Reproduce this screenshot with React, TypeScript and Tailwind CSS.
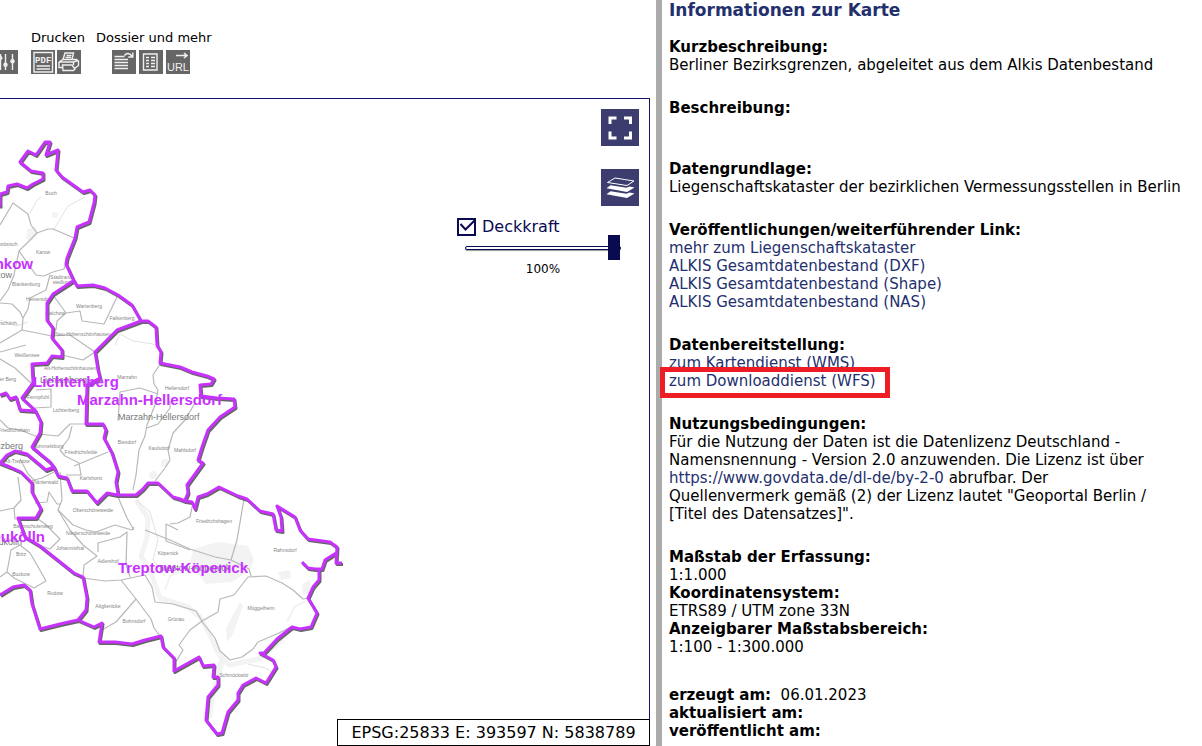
import { useState } from 'react';
import type { ReactNode } from 'react';

const districtBorders = [
  '0,207 0,194 7,192 8,186 17,184 27,188 33,184 43,179 43,173 31,171 20,162 28,151 36,155 45,142 50,142 46,155 58,150 56,170 62,177 83,192 90,190 95,195 94,203 89,222 77,227 75,238 67,258 66,264 73,279 77,286 93,285 105,288 118,295 132,305 141,321 148,321 156,327 157,345 161,352 160,363 180,367 192,372 207,376 214,379 211,384 200,385 201,396 217,398 234,399 235,407 220,417 208,430 202,447 198,460 203,463 187,485 188,493 185,500',
  '54,467 58,476 67,478 72,491 87,491 97,503 107,493 117,495 136,495 143,489 148,483 158,483 173,497 180,499 185,501 192,502 195,509 198,497 207,494 219,487 238,496 247,499 260,511 273,514 276,530 282,531 281,517 277,506 295,517 300,530 308,539 330,542 337,547 336,563 342,563',
  '336,553 325,560 322,569 315,569 308,568 302,562',
  '319,569 319,580 313,587 308,598 317,613 311,627 300,629 292,627 277,639 264,653 260,653 273,660 276,667 266,683 256,678 243,685 238,693 238,700 228,712 222,733 217,734 206,720 208,697 218,685 218,677 213,677 214,665 203,666 199,657 174,671 174,658 163,647 161,636 145,640 132,644 115,642 99,642 102,623 94,627 78,620 60,624 40,629 32,604 30,590 24,585 13,587 0,595',
  '78,620 86,610 87,598 83,577 74,573 40,546 25,537 18,518 36,518 41,509 32,492 32,483 21,472 10,467 0,463 7,455 15,451 27,454 46,470 54,467 50,462 32,447 40,433 41,422 35,410 22,398 25,394 33,383 32,364 47,363 52,356 62,357 62,350 52,338 53,328 47,320 47,303 53,294 73,281',
  '0,395 6,393 10,399 16,397 20,410 36,411',
  '141,321 117,330 95,352 98,370 100,378 87,385 86,424 103,424 106,430 104,438 112,453 118,472 116,482 118,494',
];

const localityLines = [
  '0,225 13,203 28,214 31,225 37,233 48,229 53,229 74,238',
  '37,233 19,251 14,275 8,290 0,301',
  '19,251 36,275 44,276 53,272 64,269 67,260',
  '50,275 46,290 30,298 28,309 23,318 22,330 0,343',
  '22,330 52,336 70,335 95,352 116,331',
  '0,303 12,304 20,312 23,318',
  '0,359 15,368 32,384',
  '53,295 66,313 80,311 82,321 104,324 118,295',
  '66,313 57,321 56,330',
  '160,364 153,375 154,384 158,390 155,405 147,425 145,436 139,450 136,475 133,490',
  '118,421 120,392 140,388 158,394',
  '195,403 185,420 173,433 168,450 170,460 165,468 155,481',
  '147,428 158,424 170,408 170,401',
  '36,390 51,389 51,407 35,408',
  '39,434 58,436 70,424 86,424',
  '72,426 69,438 60,450 65,456 79,463 81,475 66,475',
  '74,466 108,452',
  '60,472 62,500 58,510 73,525 86,530 96,532 115,525 132,530 134,527',
  '58,510 70,530 83,545 97,556 84,565 83,577',
  '98,552 98,543 120,537 127,532 126,564 130,577',
  '118,497 127,518 134,530',
  '20,459 28,474 34,480 42,478 58,470',
  '18,477 21,500 14,508 15,519 19,519',
  '35,503 47,502 49,492 57,504 61,504',
  '38,519 45,524 60,539 50,549 41,546',
  '0,511 14,508',
  '0,577 7,572 11,550 20,545 30,553 37,565 46,581 34,588 14,578 7,572',
  '83,578 105,581 121,580 145,575 152,587 155,602 173,604 196,611 203,623 215,638 220,651 230,660 242,657 253,649 258,642 279,633 291,627',
  '121,580 136,599 116,622 100,631',
  '136,599 151,619 154,628 160,636',
  '174,665 183,650 179,645 190,630 202,621 218,612 220,599 234,595 248,577 266,576 282,583 293,590 303,599 309,598',
  '244,499 237,540 231,560 215,557 190,549 170,540 145,530',
  '231,560 249,569 251,576',
  '193,503 190,517 178,523 170,524',
  '178,530 166,524 166,541 190,550',
  '0,420 8,428 20,430 38,437',
  '26,345 0,352',
  '62,355 83,360 95,352',
];

const faintLines = [
  '30,213 37,200 41,197',
  '54,229 68,206 85,197',
  '115,345 120,334 133,341 153,344 158,350',
  '0,320 16,326 28,322',
  '136,500 150,512 158,540 153,560 165,576',
  '248,664 265,668 272,672',
];

const localityLabels: [number, number, string][] = [
  [51, 195, 'Buch'],
  [43, 254, 'Karow'],
  [26, 286, 'Blankenburg'],
  [62, 279, 'Stadtrand-'],
  [62, 284, 'siedlung'],
  [39, 301, 'Heinersdorf'],
  [89, 308, 'Wartenberg'],
  [55, 315, 'Malchow'],
  [122, 320, 'Falkenberg'],
  [83, 336, 'Neu-Hohenschönhausen'],
  [27, 357, 'Weißensee'],
  [70, 370, 'Alt-Hohenschönhausen'],
  [4, 246, 'Französisch'],
  [2, 325, 'Niederschönh.'],
  [-2, 381, 'Prenzlauer Berg'],
  [38, 399, 'Fennpfuhl'],
  [66, 412, 'Lichtenberg'],
  [127, 379, 'Marzahn'],
  [177, 390, 'Hellersdorf'],
  [14, 432, 'Friedrichshain'],
  [48, 448, 'Rummelsburg'],
  [81, 454, 'Friedrichsfelde'],
  [127, 444, 'Biesdorf'],
  [159, 450, 'Kaulsdorf'],
  [185, 452, 'Mahlsdorf'],
  [91, 480, 'Karlshorst'],
  [17, 463, 'Alt-Treptow'],
  [45, 484, 'Plänterwald'],
  [93, 512, 'Oberschöneweide'],
  [88, 535, 'Niederschöneweide'],
  [33, 528, 'Baumschulenweg'],
  [70, 550, 'Johannisthal'],
  [108, 563, 'Adlershof'],
  [21, 556, 'Britz'],
  [21, 576, 'Buckow'],
  [55, 595, 'Rudow'],
  [108, 608, 'Altglienicke'],
  [134, 623, 'Bohnsdorf'],
  [176, 621, 'Grünau'],
  [168, 555, 'Köpenick'],
  [214, 523, 'Friedrichshagen'],
  [285, 552, 'Rahnsdorf'],
  [261, 610, 'Müggelheim'],
  [234, 677, 'Schmöckwitz'],
];

function DistrictMap() {
  return (
    <svg
      className="block h-full w-full"
      viewBox="0 99 649 647"
      preserveAspectRatio="xMinYMin slice"
      role="img"
      aria-label="Berliner Bezirksgrenzen"
      fontFamily='"Liberation Sans", Arial, sans-serif'
    >
      <g fill="#f3f3f3">
        <path d="M193 549l25-7 30 4 6 14-4 10-18 12-26 2-16-20z" />
        <path d="M27 230l8-4 3 7-6 8-6-2z" />
        <circle cx="55" cy="215" r="3" />
        <path d="M278 572l12-2 1 8-10 2zM302 584l8-4 1 12-8 4z" />
        <path d="M226 628l14-26 3 4-10 28-6 8z" />
        <circle cx="165" cy="463" r="4" />
        <circle cx="153" cy="475" r="4" />
      </g>
      <g fill="none" stroke="#f3f3f3" strokeLinejoin="round">
        <path
          strokeWidth="5"
          d="M136 500l12 18-1 20-6 18 11 20 8 22 28 9 12 10 9 16 10 22 10 10 30-6 24-20"
        />
        <path strokeWidth="6" d="M222 660l-5 20-6 20-2 18" />
        <path strokeWidth="2" d="M309 600l-14 6-8 16M165 590l5-14 16-8" />
      </g>
      <g fill="none" stroke="#e2e2e2" strokeWidth="1">
        {faintLines.map((points) => (
          <polyline key={points} points={points} />
        ))}
      </g>
      <g fill="none" stroke="#b8b8b8" strokeWidth="1.2" strokeLinejoin="round">
        {localityLines.map((points) => (
          <polyline key={points} points={points} />
        ))}
      </g>
      <g fill="#858585" fontSize="5" textAnchor="middle">
        {localityLabels.map(([x, y, name]) => (
          <text key={name} x={x} y={y}>
            {name}
          </text>
        ))}
      </g>
      <g fill="#777777" fontSize="9">
        <text x="118" y="420">Marzahn-Hellersdorf</text>
        <text x="40" y="383">Lichtenberg</text>
        <text x="12" y="278" textAnchor="end">Pankow</text>
        <text x="23" y="449" textAnchor="end">Kreuzberg</text>
        <text x="22" y="545" textAnchor="end">Neukölln</text>
        <text x="158" y="571">Treptow-Köpenick</text>
      </g>
      <g
        fill="none"
        stroke="#666666"
        strokeWidth="3"
        strokeLinejoin="round"
        transform="translate(1 1.5)"
      >
        {districtBorders.map((points) => (
          <polyline key={points} points={points} />
        ))}
      </g>
      <g fill="none" stroke="#c832ff" strokeWidth="3" strokeLinejoin="round">
        {districtBorders.map((points) => (
          <polyline key={points} points={points} />
        ))}
      </g>
      <g fill="#c832ff" fontSize="15" fontWeight="bold">
        <text x="33" y="269" textAnchor="end">Pankow</text>
        <text x="33" y="387">Lichtenberg</text>
        <text x="77" y="405">Marzahn-Hellersdorf</text>
        <text x="45" y="542" textAnchor="end">Neukölln</text>
        <text x="118" y="573">Treptow-Köpenick</text>
      </g>
    </svg>
  );
}

function ToolButton({ label, children }: { label: string; children: ReactNode }) {
  return (
    <button type="button" aria-label={label} className="block size-6 shrink-0 bg-[#666666]">
      <svg viewBox="0 0 24 24" className="size-6" fill="none" stroke="#f0f0f0" strokeWidth="1.4">
        {children}
      </svg>
    </button>
  );
}

function Toolbar() {
  return (
    <header className="flex h-[98px] items-start pt-[29px] text-[13px] leading-[18px]">
      <div className="-ml-1.5 mr-[13px] pt-[21px]">
        <ToolButton label="Einstellungen">
          <path d="M6.5 4v16M11.500 4v16M18.500 4v16" />
          <g fill="#f0f0f0" stroke="none">
            <circle cx="6.5" cy="8" r="2" />
            <circle cx="11.5" cy="14.700" r="2.200" />
            <circle cx="18.5" cy="11.300" r="2.200" />
          </g>
        </ToolButton>
      </div>
      <div className="w-[65px]">
        <div className="whitespace-nowrap">Drucken</div>
        <div className="mt-[3px] flex gap-0.5">
          <ToolButton label="PDF">
            <path d="M3 2.500h18.500v19.500H3zM5.500 16h13.500M5.500 19h13.500" />
            <text
              x="12.2"
              y="12.5"
              fill="#f0f0f0"
              stroke="none"
              fontSize="9"
              fontWeight="bold"
              textAnchor="middle"
              fontFamily='"Liberation Mono", monospace'
            >
              PDF
            </text>
          </ToolButton>
          <ToolButton label="Drucken">
            <path d="M6 9.500l2-6.500h8.500l-1.500 6.500M9.500 5.500h5M8.500 7.500h5.500" />
            <path d="M2 12l4-2.500h13.500l2 1.500v4.500l-4 3M2 12v5.500h3M2 12h14.500l4.500-1.500M16.500 12v3" />
            <path d="M5.500 15h9.500l3 4-1.500 1.500H6z" />
          </ToolButton>
        </div>
      </div>
      <div>
        <div className="whitespace-nowrap">Dossier und mehr</div>
        <div className="mt-[3px] flex gap-[3px] pl-4">
          <ToolButton label="Dossier">
            <path d="M2.500 6.500h10M2.500 9.500h13.500M2.500 12.500h13.500M2.500 15.500h13.500M2.500 18.500h13.500" />
            <path d="M12.500 5.500c2-3 5-2.500 7.500.500M20.800 2.500v4.500h-4.500" />
          </ToolButton>
          <ToolButton label="Legende">
            <path d="M4.500 4h13.500v16H4.500z" />
            <path d="M7 7.500h3M12 7.500h4M7 10.500h3M12 10.500h4M7 13.500h3M12 13.500h4M7 16.500h3M12 16.500h4" />
          </ToolButton>
          <button type="button" className="relative block size-6 shrink-0 bg-[#666666]">
            <svg
              viewBox="0 0 24 24"
              className="absolute inset-0 size-6"
              fill="none"
              stroke="#f0f0f0"
              strokeWidth="1.6"
              aria-hidden="true"
            >
              <path d="M10 5.500h11M18 3l3 2.500-3 2.500" />
            </svg>
            <span className="absolute bottom-0 left-0 w-full text-center font-['Liberation_Sans',Arial,sans-serif] text-[11px] leading-[14px] text-[#f0f0f0]">
              URL
            </span>
          </button>
        </div>
      </div>
    </header>
  );
}

function OpacityControl() {
  const [visible, setVisible] = useState(true);
  const [opacity, setOpacity] = useState(100);
  return (
    <div className="absolute right-7 top-[118px] w-[164px] text-[#0a0a50]">
      <label className="flex h-5 items-center gap-1.5 text-[16px] leading-5">
        <span className="relative block h-[18px] w-[19px]">
          <input
            type="checkbox"
            checked={visible}
            onChange={(e) => setVisible(e.target.checked)}
            className="block h-[18px] w-[19px] appearance-none border-2 border-[#0a0a50] bg-white"
          />
          {visible && (
            <svg
              viewBox="0 0 19 18"
              className="pointer-events-none absolute inset-0 h-[18px] w-[19px]"
              fill="none"
              stroke="#0a0a50"
              strokeWidth="2"
            >
              <path d="M3.500 6l5 5.500 10-10" />
            </svg>
          )}
        </span>
        Deckkraft
      </label>
      <input
        type="range"
        min={0}
        max={100}
        value={opacity}
        onChange={(e) => setOpacity(Number(e.target.value))}
        aria-label="Deckkraft in Prozent"
        className="-mt-0.5 ml-2 block h-[25px] w-[156px] appearance-none bg-transparent [&::-webkit-slider-runnable-track]:h-1 [&::-webkit-slider-runnable-track]:rounded-[2px] [&::-webkit-slider-runnable-track]:border [&::-webkit-slider-runnable-track]:border-[#0a0a50] [&::-webkit-slider-runnable-track]:bg-white [&::-webkit-slider-runnable-track]:shadow-[0_1px_1px_#999999] [&::-webkit-slider-thumb]:-mt-3 [&::-webkit-slider-thumb]:h-[25px] [&::-webkit-slider-thumb]:w-3 [&::-webkit-slider-thumb]:appearance-none [&::-webkit-slider-thumb]:bg-[#0a0a50]"
      />
      <output className="block pl-2 text-center text-[12px] leading-[18px] text-black">
        {opacity}%
      </output>
    </div>
  );
}

function MapPanel() {
  return (
    <div className="relative mr-1.5 min-h-0 flex-1 border-r border-t border-[#14146e]">
      <div className="absolute inset-0 overflow-hidden">
        <DistrictMap />
      </div>
      <div className="absolute right-2.5 top-2.5 flex flex-col gap-[23px]">
        <button
          type="button"
          aria-label="Vollbild"
          className="block h-[37px] w-[38px] bg-[#3c3c6e]"
        >
          <svg viewBox="0 0 38 37" className="h-[37px] w-[38px]" fill="none" stroke="#ffffff" strokeWidth="3">
            <path d="M9 15V9h6.500M23 9h6.500v6M29.500 22.500V29H23M15.500 29H9v-6.500" />
          </svg>
        </button>
        <button
          type="button"
          aria-label="Ebenen"
          className="block h-[37px] w-[38px] bg-[#3c3c6e]"
        >
          <svg viewBox="0 0 38 37" className="h-[37px] w-[38px]">
            <path d="M14 9l19 3-7 4.500L6.500 13.500z" fill="none" stroke="#ffffff" strokeWidth="1" />
            <path d="M9.500 16.300l16 2.500 3-1.300 5 1-7.500 4.500-20.500-3.700z" fill="#ffffff" />
            <path d="M9.500 22.300l16 2.500 3-1.300 5 1-7.500 4.500-20.500-3.700z" fill="#ffffff" />
          </svg>
        </button>
      </div>
      <OpacityControl />
      <div className="absolute -right-px bottom-0 flex h-[27px] w-[313px] items-center justify-center whitespace-nowrap border border-black bg-white text-[16px] leading-5">
        EPSG:25833 E: 393597 N: 5838789
      </div>
    </div>
  );
}

function InfoBlock({ title, children }: { title: string; children?: ReactNode }) {
  return (
    <section>
      <h2 className="font-bold">{title}</h2>
      {children}
    </section>
  );
}

function InfoLink({ children }: { children: ReactNode }) {
  return (
    <a href="#" className="text-[#24306e]">
      {children}
    </a>
  );
}

function InfoPanel() {
  return (
    <aside className="w-[546px] shrink-0 border-l-6 border-[#ababab] pl-[7px] pt-px text-[15px] leading-[18px]">
      <h1 className="mb-[19px] text-[17px] font-bold leading-[18px] text-[#24306e]">
        Informationen zur Karte
      </h1>
      <div className="flex flex-col gap-[25px]">
        <InfoBlock title="Kurzbeschreibung:">
          <p>Berliner Bezirksgrenzen, abgeleitet aus dem Alkis Datenbestand</p>
        </InfoBlock>
        <InfoBlock title="Beschreibung:">
          <p className="h-[18px]" />
        </InfoBlock>
        <InfoBlock title="Datengrundlage:">
          <p>Liegenschaftskataster der bezirklichen Vermessungsstellen in Berlin</p>
        </InfoBlock>
        <InfoBlock title="Veröffentlichungen/weiterführender Link:">
          <ul>
            <li><InfoLink>mehr zum Liegenschaftskataster</InfoLink></li>
            <li><InfoLink>ALKIS Gesamtdatenbestand (DXF)</InfoLink></li>
            <li><InfoLink>ALKIS Gesamtdatenbestand (Shape)</InfoLink></li>
            <li><InfoLink>ALKIS Gesamtdatenbestand (NAS)</InfoLink></li>
          </ul>
        </InfoBlock>
        <InfoBlock title="Datenbereitstellung:">
          <ul>
            <li><InfoLink>zum Kartendienst (WMS)</InfoLink></li>
            <li className="relative w-fit">
              <InfoLink>zum Downloaddienst (WFS)</InfoLink>
              <span className="pointer-events-none absolute -bottom-2 -left-[9px] -right-3.5 -top-[5px] border-5 border-[#ee1c25]" />
            </li>
          </ul>
        </InfoBlock>
        <InfoBlock title="Nutzungsbedingungen:">
          <p className="max-w-[496px]">
            Für die Nutzung der Daten ist die Datenlizenz Deutschland - Namensnennung - Version 2.0
            anzuwenden. Die Lizenz ist über{' '}
            <InfoLink>https://www.govdata.de/dl-de/by-2-0</InfoLink> abrufbar. Der Quellenvermerk
            gemäß (2) der Lizenz lautet "Geoportal Berlin / [Titel des Datensatzes]".
          </p>
        </InfoBlock>
        <dl>
          <dt className="font-bold">Maßstab der Erfassung:</dt>
          <dd>1:1.000</dd>
          <dt className="font-bold">Koordinatensystem:</dt>
          <dd>ETRS89 / UTM zone 33N</dd>
          <dt className="font-bold">Anzeigbarer Maßstabsbereich:</dt>
          <dd>1:100 - 1:300.000</dd>
        </dl>
      </div>
      <div className="mt-[30px]">
        <p><b>erzeugt am:</b>&nbsp; 06.01.2023</p>
        <p><b>aktualisiert am:</b></p>
        <p><b>veröffentlicht am:</b></p>
      </div>
    </aside>
  );
}

export default function App() {
  return (
    <div className="flex min-h-screen bg-white font-[Verdana,'DejaVu_Sans',sans-serif] text-black">
      <main className="flex min-w-0 flex-1 flex-col overflow-hidden">
        <Toolbar />
        <MapPanel />
      </main>
      <InfoPanel />
    </div>
  );
}
